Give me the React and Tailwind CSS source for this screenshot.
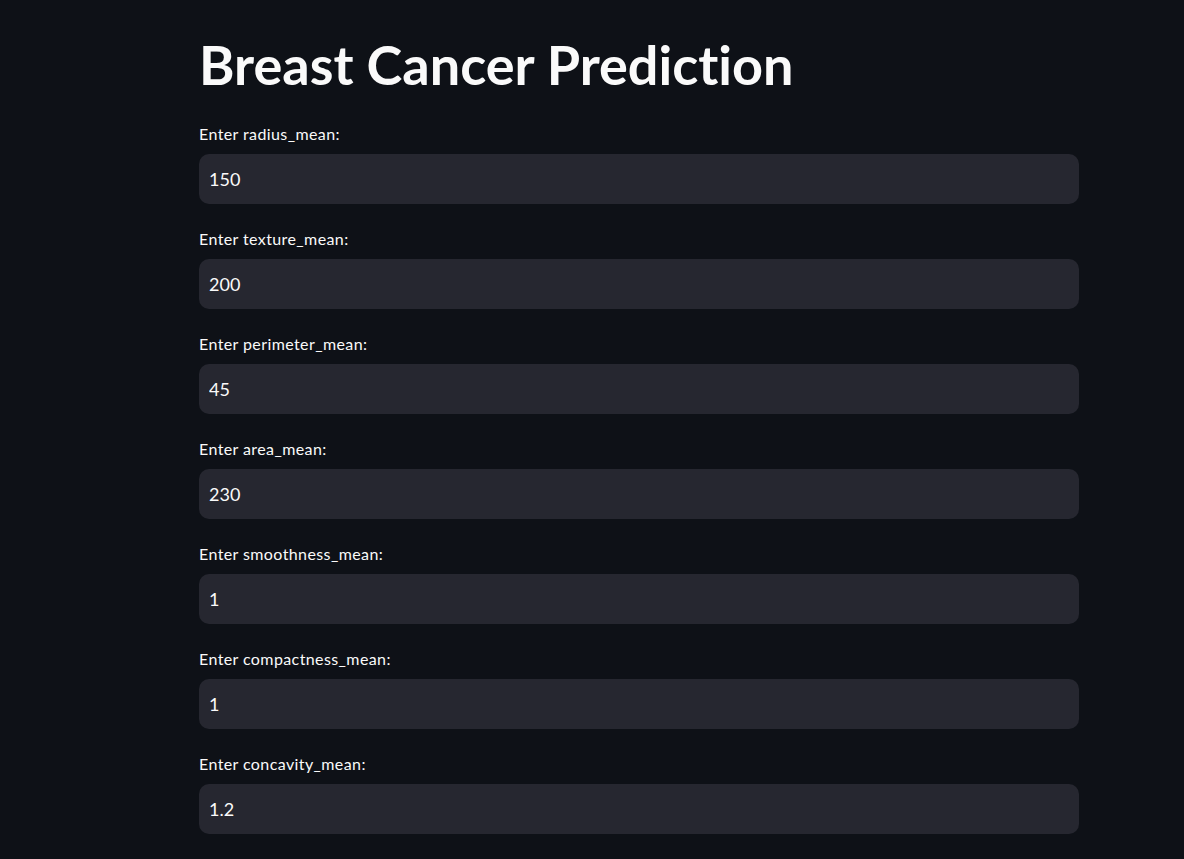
const fields = [
  { label: 'Enter radius_mean:', value: '150' },
  { label: 'Enter texture_mean:', value: '200' },
  { label: 'Enter perimeter_mean:', value: '45' },
  { label: 'Enter area_mean:', value: '230' },
  { label: 'Enter smoothness_mean:', value: '1' },
  { label: 'Enter compactness_mean:', value: '1' },
  { label: 'Enter concavity_mean:', value: '1.2' },
];

export default function App() {
  return (
    <div className="min-h-screen bg-[#0e1117] text-[#fafafa]" style={{ fontFamily: 'Lato, "Noto Sans", sans-serif' }}>
      <div className="pl-[199px] pt-[32px]">
        <div className="w-[880px]">
          <h1 className="text-[54px] font-bold leading-[65px] mb-[27px] [font-variant-ligatures:none]">Breast Cancer Prediction</h1>

          {fields.map((f) => (
            <div key={f.label} className="pb-[25px]">
              <label className="block text-[16px] tracking-[0.4px] leading-[20px] mb-[10px]">{f.label}</label>
              <div className="h-[50px] rounded-[10px] bg-[#262730] flex items-center px-[10px]">
                <input
                  type="text"
                  defaultValue={f.value}
                  className="w-full bg-transparent outline-none text-[18px] text-[#fafafa]"
                  style={{ fontFamily: 'Lato, "Noto Sans", sans-serif' }}
                />
              </div>
            </div>
          ))}
        </div>
      </div>
    </div>
  );
}
